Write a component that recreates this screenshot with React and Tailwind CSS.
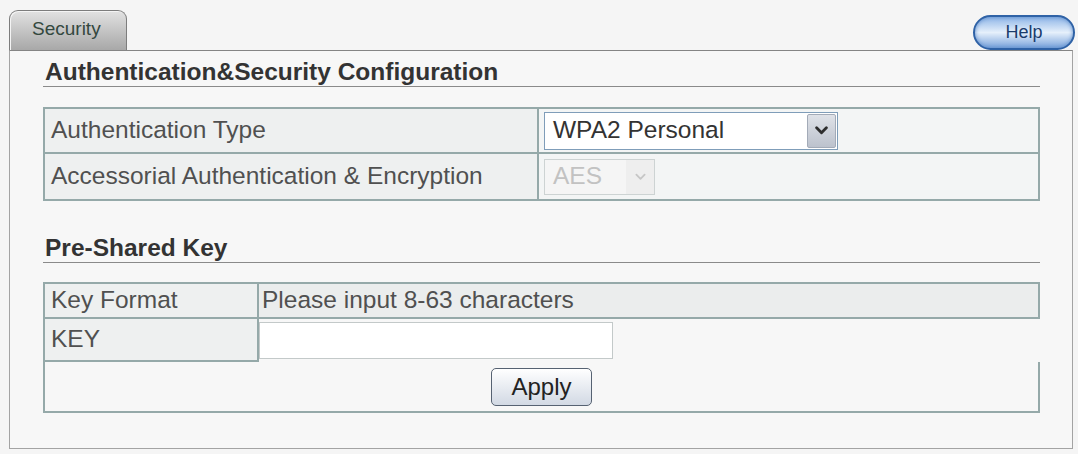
import React from "react";

function Chevron({ color = "#2d2d2d", w = 13, h = 9, sw = 2.6 }) {
  return (
    <svg width={w} height={h} viewBox="0 0 12 8" fill="none">
      <path d="M1.5 1.5 L6 6 L10.5 1.5" stroke={color} strokeWidth={sw} strokeLinecap="round" strokeLinejoin="round" />
    </svg>
  );
}

export default function App() {
  return (
    <div className="w-[1078px] h-[454px] overflow-hidden bg-[#f5f5f5] pt-[10px] pl-[9px] font-['Liberation_Sans',Arial,sans-serif]">
      {/* top row: tab + help */}
      <div className="flex items-start justify-between w-[1066px] h-[40px]">
        <div className="w-[118px] h-[40px] rounded-t-[9px] border border-b-0 border-[#7d7d7d] bg-linear-to-b from-[#e2e2e2] to-[#a8a8a8] pl-[22px] pt-[7px] text-[19px] leading-[22px] text-[#34483f] shadow-[inset_1px_1px_0_#f4f4f4]">
          Security
        </div>
        <div className="mt-[5px] w-[102px] h-[35px] rounded-full border-2 border-[#2f62a6] bg-linear-to-b from-[#8fb5e6] via-[#e6f0fb] to-[#7aa3da] shadow-[inset_0_0_4px_#5d8ccb] flex items-center justify-center text-[18px] text-[#1b3c6c]">
          Help
        </div>
      </div>

      {/* panel */}
      <div className="w-[1064px] h-[399px] border border-[#a3a3a3] border-t-[#858585] bg-[#f7f7f7] pl-[33px] pr-[32px]">
        <div className="mt-[7px] h-[29px] border-b border-[#8a8a8a] pl-[2px] text-[24.5px] leading-[28px] font-bold text-[#333]">
          Authentication&amp;Security Configuration
        </div>

        {/* table 1 */}
        <div className="mt-[20px] border-2 border-[#95a9a9]">
          <div className="flex h-[45px] border-b-2 border-[#95a9a9]">
            <div className="w-[494px] border-r-2 border-[#95a9a9] bg-[#eef0f0] flex items-center pl-[6px] text-[24.5px] text-[#505050]">
              Authentication Type
            </div>
            <div className="flex-1 bg-[#f3f5f5] flex items-center pl-[5px]">
              <div className="flex w-[294px] h-[38px] border border-[#7f9db9] bg-white">
                <div className="flex-1 flex items-center pl-[8px] text-[24.5px] text-[#333]">WPA2 Personal</div>
                <div className="w-[29px] my-[1px] mr-[1px] border border-[#a3abb8] rounded-[2px] bg-linear-to-b from-[#dfe2e8] to-[#bcc2cd] flex items-center justify-center">
                  <Chevron />
                </div>
              </div>
            </div>
          </div>
          <div className="flex h-[45px]">
            <div className="w-[494px] border-r-2 border-[#95a9a9] bg-[#eef0f0] flex items-center pl-[6px] text-[24.5px] text-[#505050]">
              Accessorial Authentication &amp; Encryption
            </div>
            <div className="flex-1 bg-[#f3f5f5] flex items-center pl-[5px]">
              <div className="flex w-[111px] h-[36px] border border-[#cdd3d3] bg-[#f5f5f5]">
                <div className="flex-1 flex items-center pl-[8px] text-[24.5px] text-[#c2c2c2]">AES</div>
                <div className="w-[28px] flex items-center justify-center bg-[#eeeeee]">
                  <Chevron color="#c6c6c6" w={11} h={8} sw={2} />
                </div>
              </div>
            </div>
          </div>
        </div>

        <div className="mt-[33px] h-[29px] border-b border-[#8a8a8a] pl-[2px] text-[24.5px] leading-[28px] font-bold text-[#333]">
          Pre-Shared Key
        </div>

        {/* table 2 */}
        <div className="mt-[19px]">
          <div className="flex h-[37px] border-2 border-[#95a9a9]">
            <div className="w-[214px] border-r-2 border-[#95a9a9] bg-[#eef0f0] flex items-center pl-[6px] text-[24.5px] text-[#505050]">
              Key Format
            </div>
            <div className="flex-1 bg-[#ebeded] flex items-center pl-[3px] text-[24.5px] text-[#505050]">
              Please input 8-63 characters
            </div>
          </div>
          <div className="flex h-[43px]">
            <div className="w-[216px] border-l-2 border-r-2 border-b-2 border-[#95a9a9] bg-[#eef0f0] flex items-center pl-[6px] text-[24.5px] text-[#505050]">
              KEY
            </div>
            <input
              type="text"
              defaultValue=""
              className="mt-[3px] w-[354px] h-[37px] border border-[#c3c9c9] bg-white px-[4px] text-[22px] outline-none"
            />
          </div>
          <div className="flex h-[51px] items-center justify-center border-x-2 border-b-2 border-[#95a9a9]">
            <div className="w-[101px] h-[38px] rounded-[5px] border-[1.5px] border-[#566272] bg-linear-to-b from-[#ffffff] to-[#d2d9e4] flex items-center justify-center text-[24px] text-[#222]">
              Apply
            </div>
          </div>
        </div>
      </div>
    </div>
  );
}
